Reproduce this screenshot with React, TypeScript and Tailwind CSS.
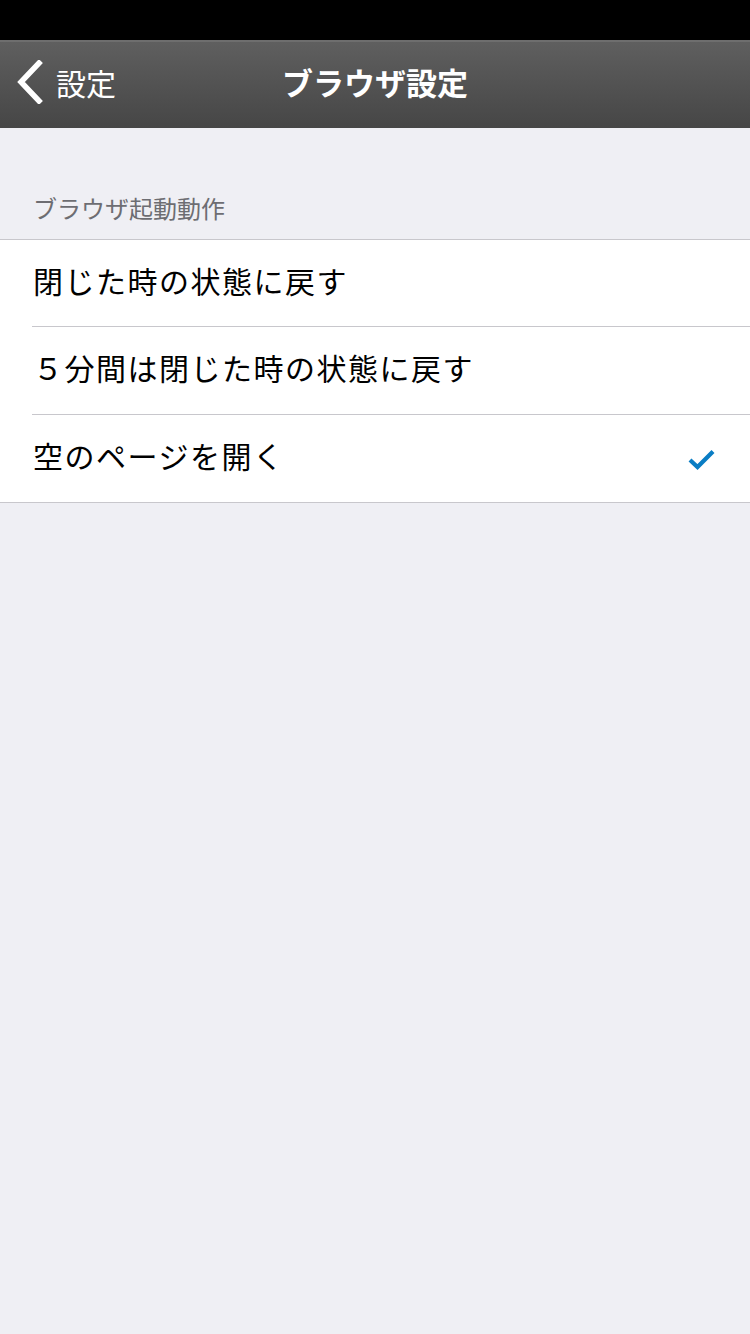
const font = "font-['Noto_Sans_CJK_JP','Noto_Sans',sans-serif]";

const options = [
  { label: "閉じた時の状態に戻す", checked: false, row: "h-[87px] border-b border-[#c8c7cc]" },
  { label: "５分間は閉じた時の状態に戻す", checked: false, row: "h-[88px] border-b border-[#c8c7cc]" },
  { label: "空のページを開く", checked: true, row: "h-[87px]" },
];

function Check() {
  return (
    <svg width="30" height="26" viewBox="0 0 30 26" fill="none">
      <path d="M3 14 L10.5 21 L26 5.5" stroke="#0a7dc4" strokeWidth="4.2" strokeLinecap="butt" strokeLinejoin="miter" />
    </svg>
  );
}

export default function App() {
  return (
    <div className={`${font} w-[750px] h-[1334px] bg-[#efeff4] flex flex-col`}>
      <div className="h-[40px] bg-black" />
      <div className="h-[88px] border-t-2 border-[#6e6e6e] bg-gradient-to-b from-[#5f5f5f] to-[#464646] flex items-center relative">
        <div className="flex items-center pl-[16px] gap-[12px] mb-[6px]">
          <svg width="28" height="44" viewBox="0 0 28 44" fill="none">
            <path d="M23 3 L5 22 L23 41" stroke="white" strokeWidth="5.5" strokeLinecap="square" strokeLinejoin="miter" />
          </svg>
          <span className="text-[30px] text-white leading-none">設定</span>
        </div>
        <div className="absolute inset-0 flex items-center justify-center pb-[7px] pointer-events-none">
          <span className="text-[31px] font-bold text-white leading-none">ブラウザ設定</span>
        </div>
      </div>
      <div className="h-[62px]" />
      <div className="px-[33px] pb-[14px] text-[24px] text-[#6d6d72] leading-[35px]">ブラウザ起動動作</div>
      <div className="bg-white border-y border-[#c8c7cc]">
        {options.map((o) => (
          <div key={o.label} className="pl-[32px]">
            <div className={`${o.row} flex items-center pr-[33px]`}>
              <span className="flex-1 pl-[1px] pb-[7px] text-[30px] tracking-[1.5px] text-black leading-none">{o.label}</span>
              {o.checked && <Check />}
            </div>
          </div>
        ))}
      </div>
    </div>
  );
}
